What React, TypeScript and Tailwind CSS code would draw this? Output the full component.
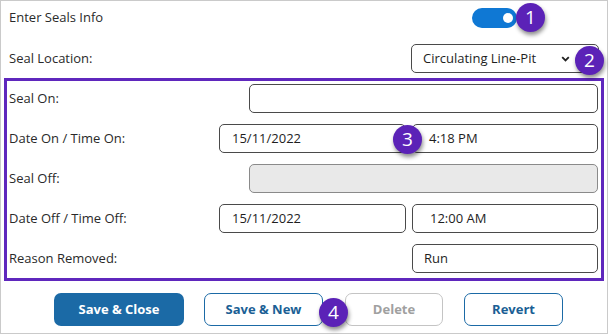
import React from "react";

function Badge({ n, className }: { n: number; className: string }) {
  return (
    <div
      className={`absolute flex h-[29px] w-[29px] items-center justify-center rounded-full bg-[#5b22b7] text-[19px] leading-none text-white shadow-[1px_3px_4px_rgba(0,0,0,0.45)] ${className}`}
    >
      {n}
    </div>
  );
}

function Field({ value, className }: { value?: string; className: string }) {
  return (
    <div
      className={`flex h-[29px] items-center rounded-[5px] border border-[#4a4a4a] bg-white text-[13px] text-[#1e1e1e] ${className}`}
    >
      {value}
    </div>
  );
}

export default function App() {
  return (
    <div
      className="relative flex h-[334px] w-[608px] flex-col border border-[#cacaca] bg-white px-[3px] text-[#2a2a2a]"
      style={{ fontFamily: '"Open Sans", "Noto Sans", sans-serif' }}
    >
      <div className="flex h-[34px] items-center justify-between pl-[5px] text-[13px]">
        <span>Enter Seals Info</span>
        <div className="mr-[87px] flex h-[20px] w-[45px] items-center justify-end rounded-full bg-[#0f78d4] pr-[4px]">
          <div className="h-[10px] w-[10px] rounded-full bg-white" />
        </div>
      </div>

      <div className="mt-[9px] flex h-[29px] items-center justify-between pl-[5px] pr-[5px] text-[13px]">
        <span>Seal Location:</span>
        <div className="flex h-[29px] w-[188px] items-center justify-between rounded-[5px] border border-[#4a4a4a] pl-[11px] pr-[28px] text-[#1e1e1e]">
          <span>Circulating Line-Pit</span>
          <svg width="9" height="6" viewBox="0 0 9 6" fill="none">
            <path d="M1.2 1.2 L4.5 4.5 L7.8 1.2" stroke="#222" strokeWidth="1.8" />
          </svg>
        </div>
      </div>

      <div className="mt-[5px] flex flex-col gap-[11px] border-[3px] border-[#5f27bd] pb-[5px] pl-[2px] pr-[3px] pt-[3px] text-[13px]">
        <div className="flex items-center justify-between">
          <span>Seal On:</span>
          <Field className="w-[349px]" />
        </div>
        <div className="flex items-center justify-between">
          <span>Date On / Time On:</span>
          <div className="flex gap-[6px]">
            <Field value="15/11/2022" className="w-[187px] pl-[12px]" />
            <Field value="4:18 PM" className="w-[186px] pl-[16px]" />
          </div>
        </div>
        <div className="flex items-center justify-between">
          <span>Seal Off:</span>
          <div className="h-[29px] w-[349px] rounded-[5px] border border-[#8a8a8a] bg-[#e9e9e9]" />
        </div>
        <div className="flex items-center justify-between">
          <span>Date Off / Time Off:</span>
          <div className="flex gap-[6px]">
            <Field value="15/11/2022" className="w-[187px] pl-[12px]" />
            <Field value="12:00 AM" className="w-[186px] pl-[17px]" />
          </div>
        </div>
        <div className="flex items-center justify-between">
          <span>Reason Removed:</span>
          <Field value="Run" className="w-[186px] pl-[11px]" />
        </div>
      </div>

      <div className="mt-[12px] flex h-[33px] items-stretch pl-[50px] text-[13px] font-bold">
        <button className="w-[130px] rounded-[7px] bg-[#1b6aa6] text-white">Save &amp; Close</button>
        <button className="ml-[20px] w-[119px] rounded-[7px] border border-[#1b6aa6] text-[#1b5f95]">
          Save &amp; New
        </button>
        <button className="ml-[22px] w-[98px] rounded-[7px] border border-[#c4c4c4] text-[#a0a0a0]">Delete</button>
        <button className="ml-[21px] w-[99px] rounded-[7px] border border-[#1b6aa6] text-[#1b5f95]">Revert</button>
      </div>

      <Badge n={1} className="left-[515px] top-[2px]" />
      <Badge n={2} className="left-[574px] top-[45px]" />
      <Badge n={3} className="left-[392px] top-[124px]" />
      <Badge n={4} className="left-[318px] top-[297px]" />
    </div>
  );
}
